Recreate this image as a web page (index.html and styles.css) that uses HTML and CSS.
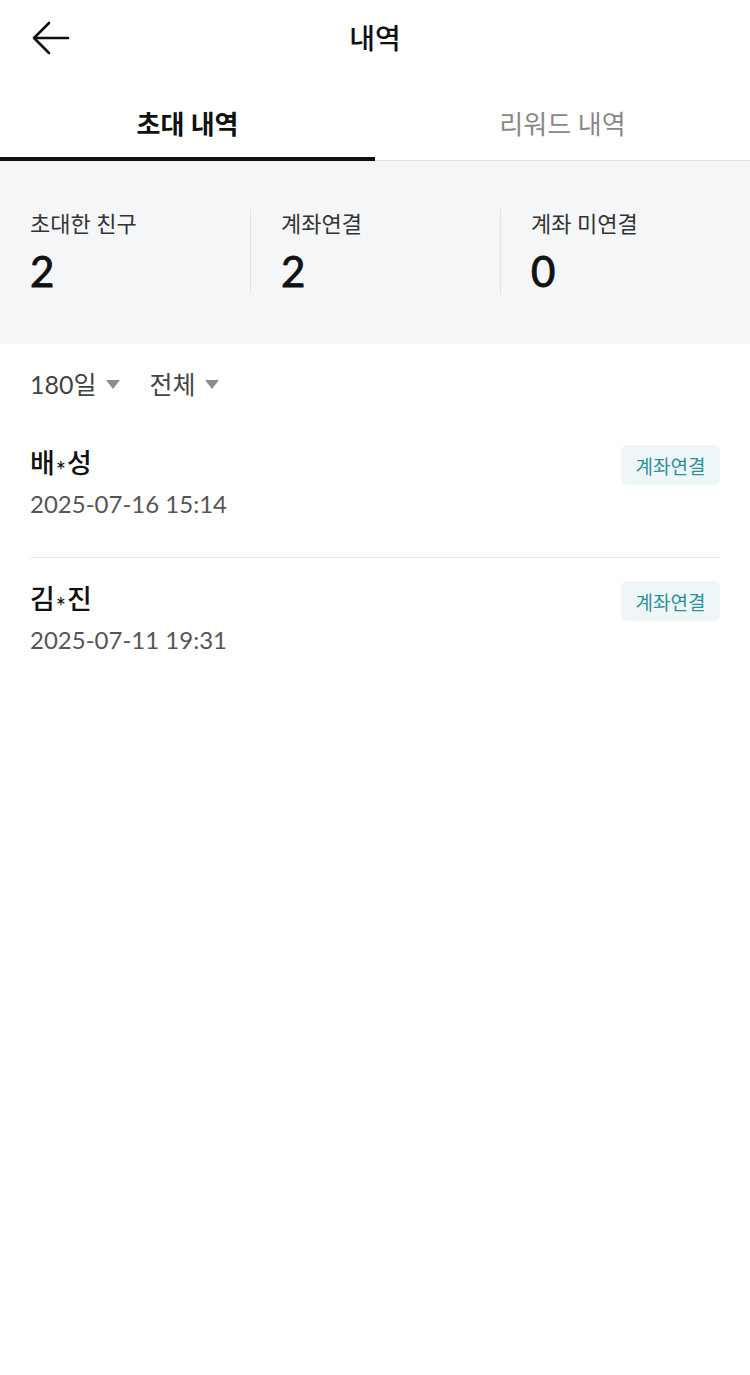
FILE: index.html
```html
<!DOCTYPE html>
<html lang="ko">
<head>
<meta charset="utf-8">
<title>내역</title>
<link rel="stylesheet" href="styles.css">
</head>
<body>
<div class="page">
  <header class="header">
    <button class="back" aria-label="뒤로">
      <svg width="40" height="36" viewBox="0 0 40 36" fill="none" stroke="#111" stroke-width="2.6" stroke-linecap="round" stroke-linejoin="round">
        <path d="M37 18H4"/>
        <path d="M18 3L3 18L18 33"/>
      </svg>
    </button>
    <h1 class="title">내역</h1>
  </header>

  <nav class="tabs">
    <div class="tab active">초대 내역</div>
    <div class="tab">리워드 내역</div>
  </nav>

  <section class="stats">
    <div class="stat">
      <div class="stat-label">초대한 친구</div>
      <div class="stat-value">2</div>
    </div>
    <div class="stat">
      <div class="stat-label">계좌연결</div>
      <div class="stat-value">2</div>
    </div>
    <div class="stat">
      <div class="stat-label">계좌 미연결</div>
      <div class="stat-value">0</div>
    </div>
  </section>

  <div class="filters">
    <div class="filter">180일 <span class="caret"></span></div>
    <div class="filter">전체 <span class="caret"></span></div>
  </div>

  <ul class="list">
    <li class="item">
      <div class="item-main">
        <div class="name">배<span class="mask">*</span>성</div>
        <div class="date">2025-07-16 15:14</div>
      </div>
      <span class="badge">계좌연결</span>
    </li>
    <li class="item">
      <div class="item-main">
        <div class="name">김<span class="mask">*</span>진</div>
        <div class="date">2025-07-11 19:31</div>
      </div>
      <span class="badge">계좌연결</span>
    </li>
  </ul>
</div>
</body>
</html>
```

FILE: styles.css
```css
* { box-sizing: border-box; margin: 0; padding: 0; }

body {
  background: #fff;
  font-family: "Lato", "Noto Sans CJK KR", sans-serif;
  color: #111;
}

.page {
  width: 750px;
  min-height: 1375px;
  background: #fff;
}

.header {
  height: 76px;
  display: flex;
  align-items: center;
  justify-content: center;
  position: relative;
}

.back {
  position: absolute;
  left: 31px;
  top: 20px;
  background: none;
  border: 0;
  width: 40px;
  height: 36px;
  display: flex;
}

.title {
  font-size: 28px;
  font-weight: 500;
  color: #111;
  margin-top: -2px;
}

.tabs {
  display: flex;
  height: 85px;
  border-bottom: 1px solid #e2e3e6;
}

.tab {
  flex: 1;
  display: flex;
  align-items: center;
  justify-content: center;
  font-size: 26px;
  color: #888;
  padding-top: 8px;
}

.tab.active {
  color: #111;
  font-weight: 700;
  border-bottom: 4px solid #111;
  margin-bottom: -1px;
  padding-top: 11px;
}

.stats {
  background: #f5f6f8;
  height: 183px;
  display: grid;
  grid-template-columns: repeat(3, 1fr);
  align-items: center;
}

.stat {
  padding-left: 30px;
  display: flex;
  flex-direction: column;
  gap: 9px;
  border-left: 1px solid #e1e2e5;
  margin-top: -3px;
}

.stat:first-child { border-left: 0; }

.stat-label {
  font-size: 22px;
  color: #333;
  line-height: 30px;
}

.stat-value {
  font-size: 42px;
  font-weight: 400;
  -webkit-text-stroke: 0.9px #111;
  color: #111;
  line-height: 46px;
}

.filters {
  display: flex;
  gap: 30px;
  padding: 0 30px;
  height: 78px;
  align-items: center;
}

.filter {
  font-size: 25px;
  color: #444;
  display: flex;
  align-items: center;
  gap: 9px;
}

.caret {
  width: 0;
  height: 0;
  border-left: 7px solid transparent;
  border-right: 7px solid transparent;
  border-top: 9px solid #8a8d92;
  margin-top: 3px;
}

.list {
  list-style: none;
  padding: 0 30px;
}

.item {
  display: flex;
  justify-content: space-between;
  align-items: flex-start;
  height: 136px;
  padding-top: 23px;
  border-bottom: 1px solid #ececee;
}

.item:last-child { border-bottom: 0; }

.item-main {
  display: flex;
  flex-direction: column;
  gap: 0;
}

.name {
  font-size: 27px;
  font-weight: 500;
  color: #111;
  line-height: 36px;
}

.mask {
  font-size: 24px;
  display: inline-block;
  vertical-align: -7px;
  margin: 0 1px;
}

.date {
  font-size: 24px;
  color: #555;
  line-height: 30px;
}

.badge {
  background: #eef6f8;
  color: #2a9399;
  font-size: 19px;
  border-radius: 6px;
  width: 99px;
  height: 40px;
  display: flex;
  align-items: center;
  justify-content: center;
  margin-top: 0;
}
```
